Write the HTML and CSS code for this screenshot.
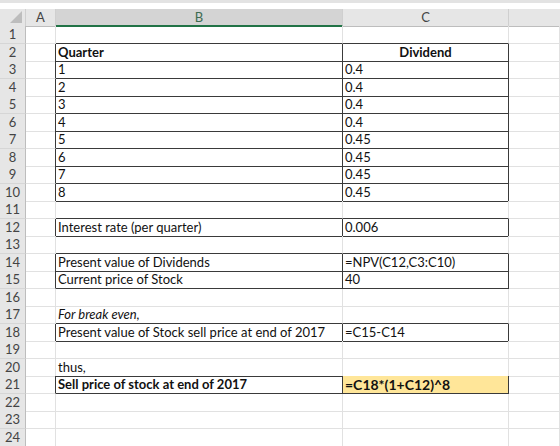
FILE: index.html
```html
<!DOCTYPE html>
<html lang="en">
  <head>
    <meta charset="UTF-8" />
    <title>Dividend NPV sheet</title>
    <link rel="stylesheet" href="styles.css">
  </head>
  <body>
    <div class="topbar"></div>
    <div class="sheet">
      <div class="row head">
        <div class="corner">
          <svg width="12" height="12" viewBox="0 0 12 12"><polygon points="12,0 12,12 0,12" fill="#bdbdbd" /></svg>
        </div>
        <div class="ch">A</div>
        <div class="ch sel">B</div>
        <div class="ch">C</div>
        <div class="ch last"></div>
      </div>

      <div class="row"><div class="rh">1</div><div class="c"></div><div class="c db"></div><div class="c db"></div><div class="c"></div></div>
      <div class="row"><div class="rh">2</div><div class="c dr"></div><div class="c dr db bold">Quarter</div><div class="c dr db bold center">Dividend</div><div class="c"></div></div>
      <div class="row"><div class="rh">3</div><div class="c dr"></div><div class="c dr db">1</div><div class="c dr db">0.4</div><div class="c"></div></div>
      <div class="row"><div class="rh">4</div><div class="c dr"></div><div class="c dr db">2</div><div class="c dr db">0.4</div><div class="c"></div></div>
      <div class="row"><div class="rh">5</div><div class="c dr"></div><div class="c dr db">3</div><div class="c dr db">0.4</div><div class="c"></div></div>
      <div class="row"><div class="rh">6</div><div class="c dr"></div><div class="c dr db">4</div><div class="c dr db">0.4</div><div class="c"></div></div>
      <div class="row"><div class="rh">7</div><div class="c dr"></div><div class="c dr db">5</div><div class="c dr db">0.45</div><div class="c"></div></div>
      <div class="row"><div class="rh">8</div><div class="c dr"></div><div class="c dr db">6</div><div class="c dr db">0.45</div><div class="c"></div></div>
      <div class="row"><div class="rh">9</div><div class="c dr"></div><div class="c dr db">7</div><div class="c dr db">0.45</div><div class="c"></div></div>
      <div class="row"><div class="rh">10</div><div class="c dr"></div><div class="c dr db">8</div><div class="c dr db">0.45</div><div class="c"></div></div>
      <div class="row"><div class="rh">11</div><div class="c"></div><div class="c db"></div><div class="c db"></div><div class="c"></div></div>
      <div class="row"><div class="rh">12</div><div class="c dr"></div><div class="c dr db">Interest rate (per quarter)</div><div class="c dr db">0.006</div><div class="c"></div></div>
      <div class="row"><div class="rh">13</div><div class="c"></div><div class="c db"></div><div class="c db"></div><div class="c"></div></div>
      <div class="row"><div class="rh">14</div><div class="c dr"></div><div class="c dr db">Present value of Dividends</div><div class="c dr db">=NPV(C12,C3:C10)</div><div class="c"></div></div>
      <div class="row"><div class="rh">15</div><div class="c dr"></div><div class="c dr db">Current price of Stock</div><div class="c dr db">40</div><div class="c"></div></div>
      <div class="row"><div class="rh">16</div><div class="c"></div><div class="c"></div><div class="c"></div><div class="c"></div></div>
      <div class="row"><div class="rh">17</div><div class="c"></div><div class="c db italic">For break even,</div><div class="c db"></div><div class="c"></div></div>
      <div class="row"><div class="rh">18</div><div class="c dr"></div><div class="c dr db">Present value of Stock sell price at end of 2017</div><div class="c dr db">=C15-C14</div><div class="c"></div></div>
      <div class="row"><div class="rh">19</div><div class="c"></div><div class="c"></div><div class="c"></div><div class="c"></div></div>
      <div class="row"><div class="rh">20</div><div class="c"></div><div class="c db">thus,</div><div class="c db"></div><div class="c"></div></div>
      <div class="row"><div class="rh">21</div><div class="c dr"></div><div class="c dr db bold">Sell price of stock at end of 2017</div><div class="c dr db bold result">=C18*(1+C12)^8</div><div class="c"></div></div>
      <div class="row"><div class="rh">22</div><div class="c"></div><div class="c"></div><div class="c"></div><div class="c"></div></div>
      <div class="row"><div class="rh">23</div><div class="c"></div><div class="c"></div><div class="c"></div><div class="c"></div></div>
      <div class="row"><div class="rh">24</div><div class="c"></div><div class="c"></div><div class="c"></div><div class="c"></div></div>
    </div>
  </body>
</html>
```

FILE: styles.css
```css
* {
  margin: 0;
  padding: 0;
  box-sizing: border-box;
}

body {
  font-family: Lato, "Liberation Sans", sans-serif;
  background: white;
  color: #111;
  width: 560px;
  height: 446px;
  overflow: hidden;
}

.topbar {
  height: 3px;
  background: #e3e3e3;
  margin-bottom: 6px;
}

.row {
  display: grid;
  grid-template-columns: 26px 30px 287px 166px 1fr;
  height: 17px;
}

.row:nth-child(even) {
  height: 18px;
}

/* Column headers */
.row.head {
  height: 17px;
}

.corner {
  background: #e6e6e6;
  border-right: 1px solid #cfcfcf;
  border-bottom: 1px solid #bdbdbd;
  display: flex;
  align-items: flex-end;
  justify-content: flex-end;
  padding: 0 3px 3px 0;
}

.ch {
  background: #e6e6e6;
  border-right: 1px solid #cfcfcf;
  border-bottom: 1px solid #bdbdbd;
  color: #444;
  font-size: 13px;
  text-align: center;
  line-height: 16px;
}

.ch.sel {
  background: #d4d4d4;
  color: #3d6b50;
  border-bottom: 2px solid #217346;
}

.ch.last {
  border-right: none;
}

/* Row headers */
.rh {
  background: #e6e6e6;
  border-right: 1px solid #bdbdbd;
  border-bottom: 1px solid #d6d6d6;
  color: #444;
  font-size: 13px;
  text-align: center;
  line-height: 17px;
}

/* Cells */
.c {
  border-right: 1px solid #e1e1e1;
  border-bottom: 1px solid #e1e1e1;
  padding: 0 2px 1px 2px;
  font-size: 13px;
  line-height: 15px;
  display: flex;
  align-items: flex-end;
  white-space: nowrap;
}

.c.dr {
  border-right-color: #3a3a3a;
}

.c.db {
  border-bottom-color: #3a3a3a;
}

.bold {
  font-weight: 700;
}

.italic {
  font-style: italic;
}

.center {
  justify-content: center;
}

.result {
  background: #ffe699;
  font-size: 14px;
}
```
